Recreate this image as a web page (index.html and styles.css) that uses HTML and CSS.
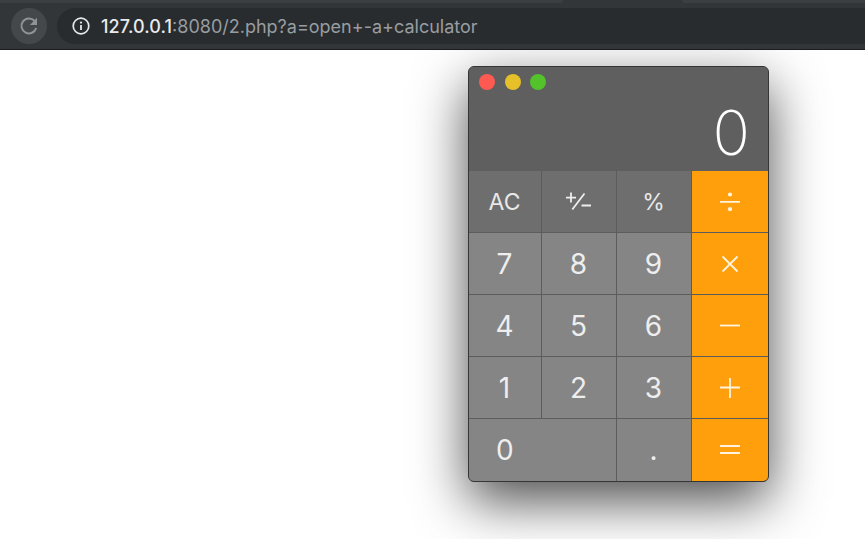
FILE: index.html
```
<!DOCTYPE html>
<html lang="en">
<head>
<meta charset="utf-8">
<title>Calculator</title>
<link rel="stylesheet" href="styles.css">
</head>
<body>
<header class="toolbar">
  <div class="tabs"><span class="tab tab-left"></span><span class="tab tab-right"></span></div>
  <div class="reload">
    <svg width="20" height="20" viewBox="0 0 20 20"><path d="M15.5 4.8A7.5 7.5 0 1 0 17.2 12" fill="none" stroke="#909396" stroke-width="2"/><path d="M18 1.8V9h-7.2z" fill="#909396"/></svg>
  </div>
  <div class="address">
    <svg class="info" width="18" height="18" viewBox="0 0 18 18"><circle cx="9" cy="9" r="7.8" fill="none" stroke="#e6e8ea" stroke-width="1.7"/><path d="M9 8v5" stroke="#e6e8ea" stroke-width="1.8"/><circle cx="9" cy="5.6" r="1.1" fill="#e6e8ea"/></svg>
    <span class="url"><span class="host">127.0.0.1</span><span class="path">:8080/2.php?a=open+-a+calculator</span></span>
  </div>
</header>
<main class="page">
  <section class="calculator">
    <div class="titlebar"><i class="dot red"></i><i class="dot yellow"></i><i class="dot green"></i></div>
    <div class="display">0</div>
    <div class="keys">
      <div class="key fn">AC</div>
      <div class="key fn"><svg width="28" height="22" viewBox="0 0 28 22"><path d="M1 6.6h10M6 1.6v10M7.3 18.5L19.5 2.5M16.5 14.5H26" fill="none" stroke="#eee" stroke-width="1.8"/></svg></div>
      <div class="key fn">%</div>
      <div class="key op"><svg width="20" height="20" viewBox="0 0 20 20"><path d="M0 9.8h20" stroke="#fff3df" stroke-width="1.8"/><circle cx="10" cy="2.5" r="2.1" fill="#fff3df"/><circle cx="10" cy="17.2" r="2.1" fill="#fff3df"/></svg></div>
      <div class="key">7</div><div class="key">8</div><div class="key">9</div>
      <div class="key op"><svg width="20" height="20" viewBox="0 0 20 20"><path d="M2.5 2.5l15 15M17.5 2.5l-15 15" stroke="#fff3df" stroke-width="1.8"/></svg></div>
      <div class="key">4</div><div class="key">5</div><div class="key">6</div>
      <div class="key op"><svg width="20" height="20" viewBox="0 0 20 20"><path d="M0 9.5h20" stroke="#fff3df" stroke-width="1.8"/></svg></div>
      <div class="key">1</div><div class="key">2</div><div class="key">3</div>
      <div class="key op"><svg width="20" height="20" viewBox="0 0 20 20"><path d="M0 9.5h20M10 0v20" stroke="#fff3df" stroke-width="1.8"/></svg></div>
      <div class="key zero">0</div><div class="key">.</div>
      <div class="key op"><svg width="20" height="20" viewBox="0 0 20 20"><path d="M0 6h20M0 13h20" stroke="#fff3df" stroke-width="1.8"/></svg></div>
    </div>
  </section>
</main>
</body>
</html>
```
FILE: styles.css
```
* { box-sizing: border-box; }
body {
  margin: 0;
  height: 539px;
  overflow: hidden;
  background: #fff;
  font-family: Inter, "Liberation Sans", sans-serif;
}
.toolbar {
  position: relative;
  display: flex;
  align-items: flex-start;
  height: 50px;
  padding: 8px 0 0 11px;
  background: #323639;
  border-bottom: 1px solid #1b1d1e;
}
.tabs {
  position: absolute;
  inset: 0 0 auto;
  display: flex;
  justify-content: space-between;
  height: 3px;
}
.tab { background: #3b3f42; }
.tab-left { width: 563px; border-radius: 0 0 3px 0; }
.tab-right { width: 183px; border-radius: 0 0 0 3px; }
.reload {
  display: flex;
  align-items: center;
  justify-content: center;
  width: 36px;
  height: 36px;
  border-radius: 50%;
  background: #45484b;
}
.address {
  display: flex;
  flex: 1;
  align-items: center;
  height: 36px;
  margin-left: 10px;
  padding-left: 14px;
  border-radius: 18px 0 0 18px;
  background: #282c2f;
}
.info { margin-left: 0.5px; }
.url {
  margin-left: 11.5px;
  font-size: 18px;
  line-height: 37px;
  white-space: nowrap;
}
.host { color: #e8eaed; font-weight: 500; letter-spacing: 0.1px; }
.path { color: #999da1; }
.page {
  padding: 16px 0 0 468px;
}
.calculator {
  width: 301px;
  height: 416px;
  border: 1px solid #363636;
  border-radius: 6px;
  background: #5c5c5c;
  box-shadow: 0 19px 53px rgba(0, 0, 0, .7);
  overflow: hidden;
}
.titlebar {
  display: flex;
  gap: 9.8px;
  height: 29px;
  padding: 6.5px 0 0 9.8px;
  background: #5f5f5f;
}
.dot { width: 16px; height: 16px; border-radius: 50%; }
.red { background: #ff5a52; }
.yellow { background: #e6c029; }
.green { background: #53c22b; }
.display {
  height: 75px;
  padding-right: 18px;
  background: #5f5f5f;
  color: #fff;
  font-size: 62px;
  font-weight: 200;
  line-height: 74px;
  text-align: right;
}
.keys {
  display: grid;
  grid-template-columns: 72px 74px 74px 76px;
  grid-template-rows: 61px 61px 61px 61px 62px;
  gap: 1px;
}
.key {
  display: flex;
  align-items: center;
  justify-content: center;
  padding-right: 1px;
  background: #858585;
  color: #eee;
  font-size: 28px;
  font-weight: 400;
}
.fn { background: #6e6e6e; color: #e8e8e8; font-size: 23px; }
.op { padding-right: 0; background: #ff9f0c; }
.zero { grid-column: span 2; justify-content: flex-start; padding-left: 27px; }
```
